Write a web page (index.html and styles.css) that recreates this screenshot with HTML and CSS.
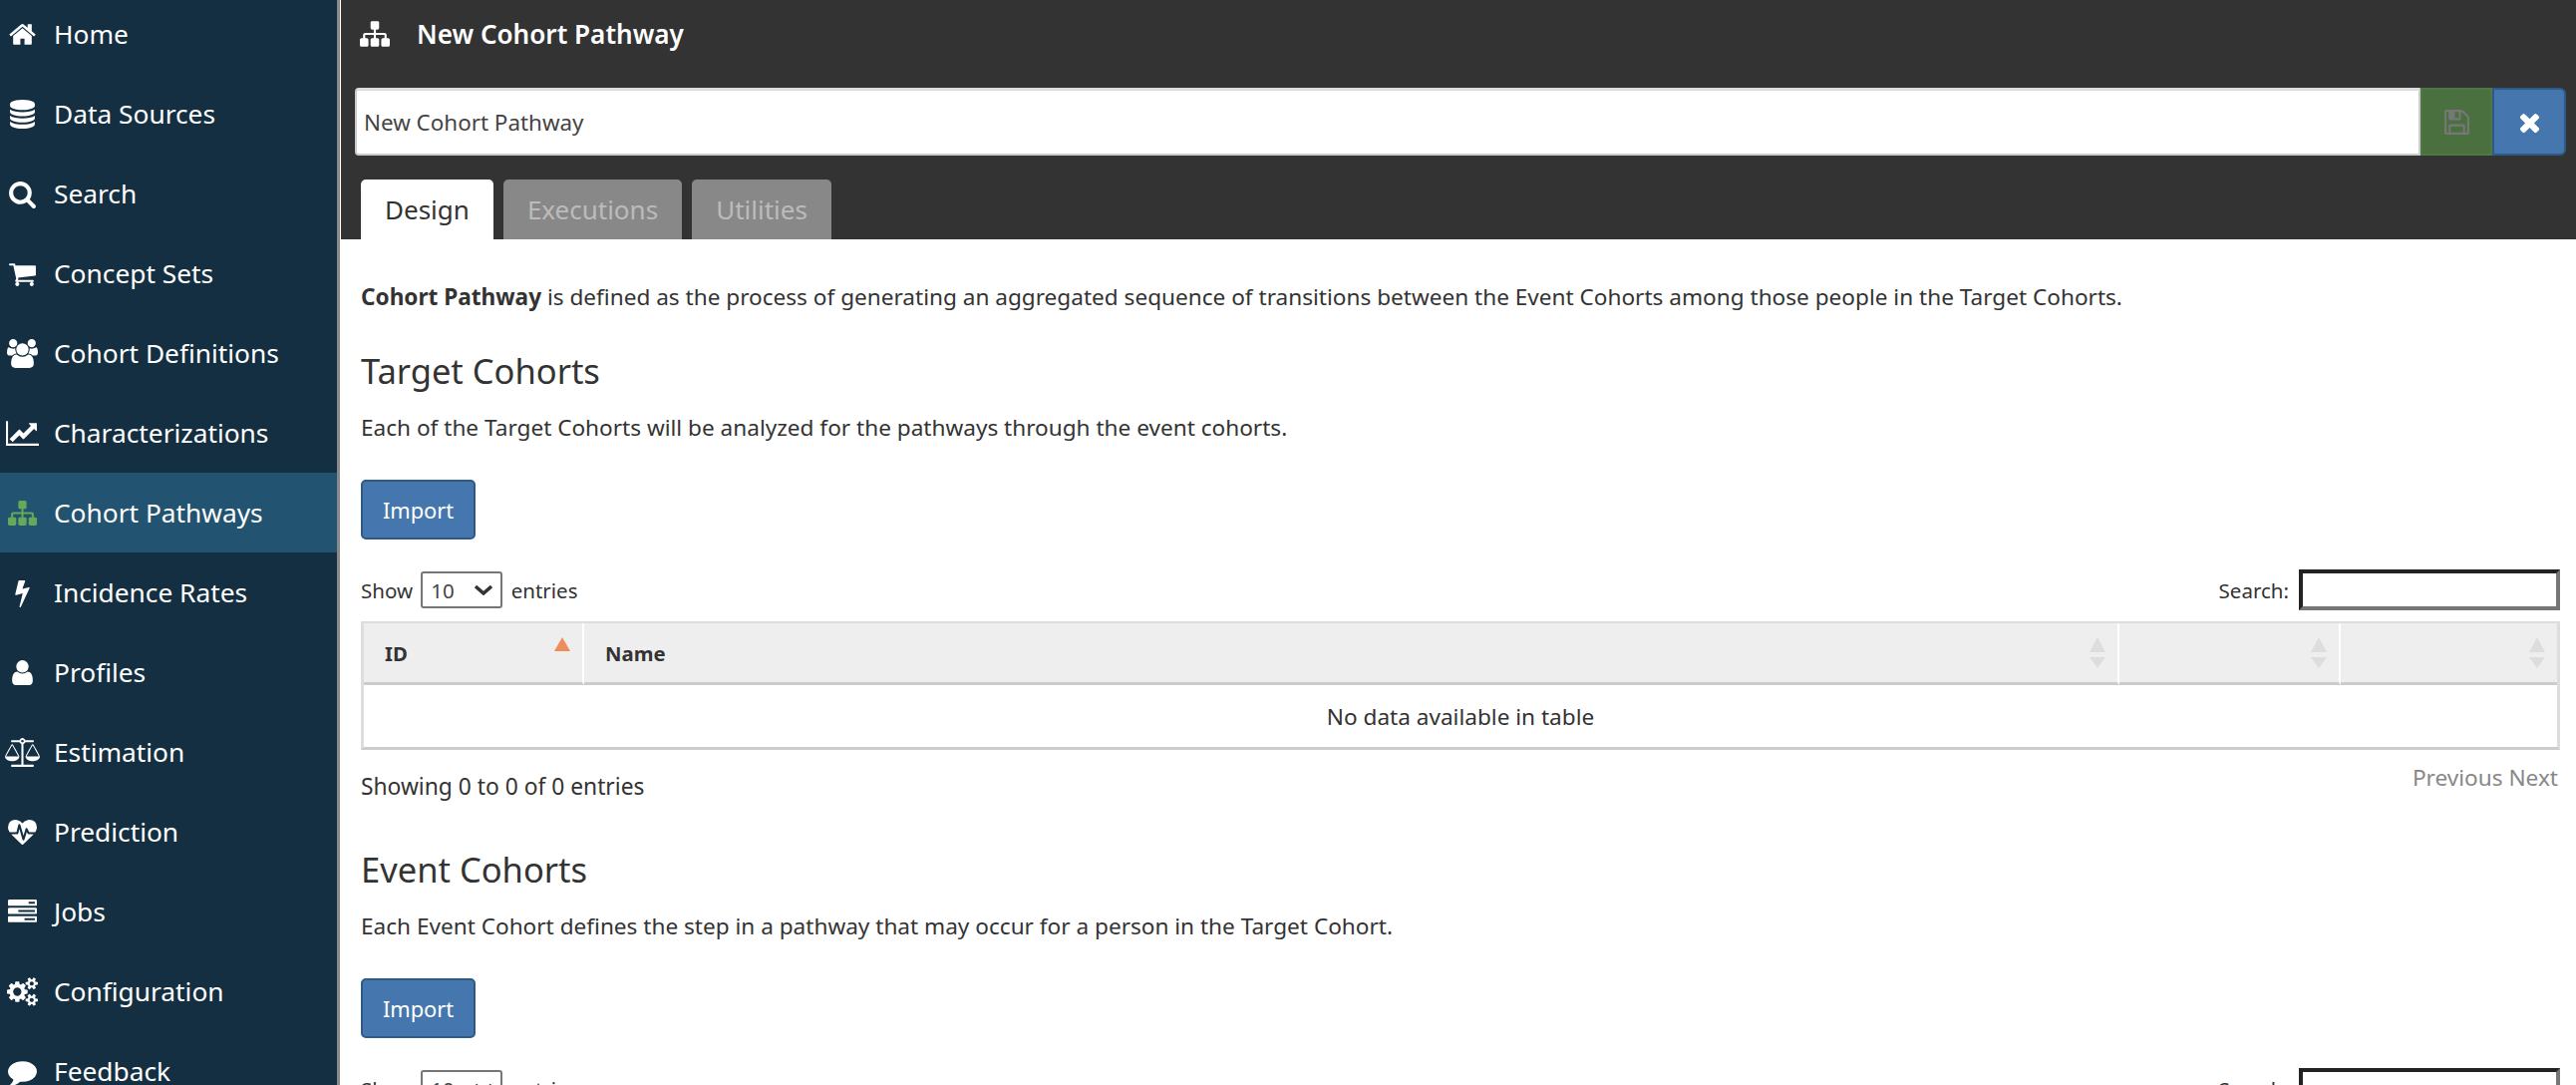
FILE: index.html
```html
<!DOCTYPE html>
<html lang="en">

<head>
    <meta charset="UTF-8">
    <title>New Cohort Pathway</title>
    <link rel="stylesheet" href="styles.css">
</head>

<body>
    <svg class="sprite" xmlns="http://www.w3.org/2000/svg">
        <symbol id="i-home" viewBox="0 0 1792 1792"><path d="M1472 992v480q0 26-19 45t-45 19h-384v-384h-256v384h-384q-26 0-45-19t-19-45v-480q0-1 .5-3t.5-3l575-474 575 474q1 2 1 6zm223-69l-62 74q-8 9-21 11h-3q-13 0-21-7l-692-577-692 577q-12 8-24 7-13-2-21-11l-62-74q-8-10-7-23.500t11-21.500l719-599q32-26 76-26t76 26l244 204v-195q0-14 9-23t23-9h192q14 0 23 9t9 23v408l219 182q10 8 11 21.500t-7 23.500z"/></symbol>
        <symbol id="i-database" viewBox="0 0 1536 1792"><path d="M768 768q237 0 443-43t325-127v170q0 69-103 128t-280 93.500-385 34.500-385-34.500-280-93.500-103-128v-170q119 84 325 127t443 43zm0 768q237 0 443-43t325-127v170q0 69-103 128t-280 93.500-385 34.500-385-34.500-280-93.500-103-128v-170q119 84 325 127t443 43zm0-384q237 0 443-43t325-127v170q0 69-103 128t-280 93.500-385 34.500-385-34.500-280-93.500-103-128v-170q119 84 325 127t443 43zm0-1152q208 0 385 34.500t280 93.500 103 128v128q0 69-103 128t-280 93.500-385 34.500-385-34.500-280-93.500-103-128v-128q0-69 103-128t280-93.500 385-34.500z"/></symbol>
        <symbol id="i-search" viewBox="0 0 1792 1792"><path d="M1216 832q0-185-131.500-316.500t-316.500-131.500-316.500 131.500-131.500 316.500 131.500 316.500 316.500 131.500 316.500-131.500 131.500-316.500zm512 832q0 52-38 90t-90 38q-54 0-90-38l-343-342q-179 124-399 124-143 0-273.500-55.500t-225-150-150-225-55.500-273.500 55.500-273.500 150-225 225-150 273.500-55.500 273.500 55.500 225 150 150 225 55.500 273.500q0 220-124 399l343 343q37 37 37 90z"/></symbol>
        <symbol id="i-cart" viewBox="0 0 1792 1792"><path d="M704 1536q0 52-38 90t-90 38-90-38-38-90 38-90 90-38 90 38 38 90zm896 0q0 52-38 90t-90 38-90-38-38-90 38-90 90-38 90 38 38 90zm128-1088v512q0 24-16.500 42.500t-40.500 21.500l-1044 122q13 60 13 70 0 16-24 64h920q26 0 45 19t19 45-19 45-45 19h-1024q-26 0-45-19t-19-45q0-11 8-31.500t16-36 21.500-40 15.500-29.500l-177-823h-204q-26 0-45-19t-19-45 19-45 45-19h256q16 0 28.500 6.500t19.500 15.500 13 24.500 8 26 5.500 29.500 4.500 26h1201q26 0 45 19t19 45z"/></symbol>
        <symbol id="i-users" viewBox="0 0 1920 1792"><path d="M593 896q-162 5-265 128h-134q-82 0-138-40.500t-56-118.500q0-353 124-353 6 0 43.500 21t97.500 42.500 119 21.500q67 0 133-23-5 37-5 66 0 139 81 256zm1071 637q0 120-73 189.500t-194 69.500h-874q-121 0-194-69.500t-73-189.500q0-53 3.500-103.500t14-109 26.500-108.500 43-97.500 62-81 85.500-53.500 111.500-20q10 0 43 21.500t73 48 107 48 135 21.500 135-21.500 107-48 73-48 43-21.500q61 0 111.500 20t85.500 53.500 62 81 43 97.500 26.500 108.500 14 109 3.500 103.500zm-1024-1277q0 106-75 181t-181 75-181-75-75-181 75-181 181-75 181 75 75 181zm704 384q0 159-112.500 271.500t-271.500 112.500-271.500-112.500-112.500-271.500 112.500-271.500 271.500-112.500 271.500 112.500 112.500 271.500zm576 225q0 78-56 118.500t-138 40.500h-134q-103-123-265-128 81-117 81-256 0-29-5-66 66 23 133 23 59 0 119-21.500t97.500-42.500 43.500-21q124 0 124 353zm-128-609q0 106-75 181t-181 75-181-75-75-181 75-181 181-75 181 75 75 181z"/></symbol>
        <symbol id="i-chart" viewBox="0 0 2048 1792"><path d="M2048 1536v128h-2048v-1536h128v1408h1920zm-128-1248v435q0 21-19.500 29.500t-35.500-7.500l-121-121-633 633q-10 10-23 10t-23-10l-233-233-416 416-192-192 585-585q10-10 23-10t23 10l233 233 464-464-121-121q-16-16-7.500-35.500t29.500-19.500h435q14 0 23 9t9 23z"/></symbol>
        <symbol id="i-sitemap" viewBox="0 0 1792 1792"><path d="M1792 1248v320q0 40-28 68t-68 28h-320q-40 0-68-28t-28-68v-320q0-40 28-68t68-28h96v-192h-512v192h96q40 0 68 28t28 68v320q0 40-28 68t-68 28h-320q-40 0-68-28t-28-68v-320q0-40 28-68t68-28h96v-192h-512v192h96q40 0 68 28t28 68v320q0 40-28 68t-68 28h-320q-40 0-68-28t-28-68v-320q0-40 28-68t68-28h96v-192q0-52 38-90t90-38h512v-192h-96q-40 0-68-28t-28-68v-320q0-40 28-68t68-28h320q40 0 68 28t28 68v320q0 40-28 68t-68 28h-96v192h512q52 0 90 38t38 90v192h96q40 0 68 28t28 68z"/></symbol>
        <symbol id="i-bolt" viewBox="0 0 896 1792"><path d="M885 566q18 20 7 44l-540 1157q-13 25-42 25-4 0-14-2-17-5-25.500-19t-4.500-30l197-808-406 101q-4 1-12 1-18 0-31-11-18-15-13-39l201-825q4-14 16-23t28-9h328q19 0 32 12.500t13 29.500q0 8-5 18l-171 463 396-98q8-2 12-2 19 0 34 15z"/></symbol>
        <symbol id="i-user" viewBox="128 0 1536 1792"><path d="M1536 1399q0 109-62.500 187t-150.500 78h-854q-88 0-150.500-78t-62.500-187q0-85 8.500-160.500t31.500-152 58.500-131 94-89 134.500-34.500q131 128 313 128t313-128q76 0 134.500 34.500t94 89 58.500 131 31.500 152 8.500 160.500zm-256-887q0 159-112.500 271.500t-271.500 112.500-271.500-112.500-112.500-271.500 112.500-271.500 271.500-112.500 271.500 112.500 112.500 271.500z"/></symbol>
        <symbol id="i-scale" viewBox="0 0 2176 1792"><path d="M1728 448l-384 704h768zm-1280 0l-384 704h768zm821-192q-14 40-45.500 71.500t-71.500 45.500v1291h608q14 0 23 9t9 23v64q0 14-9 23t-23 9h-1344q-14 0-23-9t-9-23v-64q0-14 9-23t23-9h608v-1291q-40-14-71.500-45.500t-45.500-71.500h-491q-14 0-23-9t-9-23v-64q0-14 9-23t23-9h491q21-57 70-92.500t111-35.500 111 35.500 70 92.500h491q14 0 23 9t9 23v64q0 14-9 23t-23 9h-491zm-181 16q33 0 56.500-23.500t23.500-56.500-23.500-56.500-56.500-23.500-56.500 23.500-23.500 56.500 23.500 56.500 56.500 23.500zm1088 880q0 73-46.500 131t-117.500 91-144.500 49.500-139.500 16.500-139.500-16.500-144.500-49.500-117.500-91-46.500-131q0-11 35-81t92-174.500 107-195.500 102-184 56-100q18-33 56-33t56 33q4 7 56 100t102 184 107 195.500 92 174.500 35 81zm-1280 0q0 73-46.500 131t-117.500 91-144.500 49.500-139.500 16.500-139.500-16.500-144.500-49.500-117.500-91-46.500-131q0-11 35-81t92-174.500 107-195.500 102-184 56-100q18-33 56-33t56 33q4 7 56 100t102 184 107 195.500 92 174.500 35 81z"/></symbol>
        <symbol id="i-heartbeat" viewBox="0 0 1792 1792"><path d="M1280 1024h305q-5 6-10 10.500t-9 7.500l-3 4-623 600q-18 18-44 18t-44-18l-624-602q-5-2-21-20h369q22 0 39.500-13.500t22.500-34.500l70-281 190 667q6 20 23 33t39 13q21 0 38-13t23-33l146-485 56 112q18 35 57 35zm512-428q0 145-103 300h-369l-111-221q-8-17-25.500-27t-36.500-8q-45 5-56 46l-129 430-196-686q-6-20-23.500-33t-39.500-13-39 13.500-22 34.500l-116 464h-423q-103-155-103-300 0-220 127-344t351-124q62 0 126.500 21.500t120 58 95.500 68.500 76 68q36-36 76-68t95.500-68.500 120-58 126.500-21.500q224 0 351 124t127 344z"/></symbol>
        <symbol id="i-tasks" viewBox="0 0 1792 1792"><path d="M1024 1408h640v-128h-640v128zm-384-512h1024v-128h-1024v128zm640-512h384v-128h-384v128zm512 832v256q0 26-19 45t-45 19h-1664q-26 0-45-19t-19-45v-256q0-26 19-45t45-19h1664q26 0 45 19t19 45zm0-512v256q0 26-19 45t-45 19h-1664q-26 0-45-19t-19-45v-256q0-26 19-45t45-19h1664q26 0 45 19t19 45zm0-512v256q0 26-19 45t-45 19h-1664q-26 0-45-19t-19-45v-256q0-26 19-45t45-19h1664q26 0 45 19t19 45z"/></symbol>
        <symbol id="i-cogs" viewBox="0 0 1920 1792"><path d="M896 896q0-106-75-181t-181-75-181 75-75 181 75 181 181 75 181-75 75-181zm768 512q0-52-38-90t-90-38-90 38-38 90q0 53 37.500 90.500t90.500 37.500 90.500-37.500 37.500-90.500zm0-1024q0-52-38-90t-90-38-90 38-38 90q0 53 37.500 90.500t90.500 37.500 90.500-37.500 37.500-90.500zm-384 421v185q0 10-7 19.500t-16 10.500l-155 24q-11 35-32 76 34 48 90 115 7 11 7 20 0 12-7 19-23 30-82.500 89.500t-78.500 59.500q-11 0-21-7l-115-90q-37 19-77 31-11 108-23 155-7 24-30 24h-186q-11 0-20-7.500t-10-17.500l-23-153q-34-10-75-31l-118 89q-7 7-20 7-11 0-21-8-144-133-144-160 0-9 7-19 10-14 41-53t47-61q-23-44-35-82l-152-24q-10-1-17-9.500t-7-19.500v-185q0-10 7-19.500t16-10.500l155-24q11-35 32-76-34-48-90-115-7-11-7-20 0-12 7-20 22-30 82-89t79-59q11 0 21 7l115 90q34-18 77-32 11-108 23-154 7-24 30-24h186q11 0 20 7.500t10 17.500l23 153q34 10 75 31l118-89q8-7 20-7 11 0 21 8 144 133 144 160 0 8-7 19-12 16-42 54t-45 60q23 48 34 82l152 23q10 2 17 10.500t7 19.500zm640 533v140q0 16-149 31-12 27-30 52 51 113 51 138 0 4-4 7-122 71-124 71-8 0-46-47t-52-68q-20 2-30 2t-30-2q-14 21-52 68t-46 47q-2 0-124-71-4-3-4-7 0-25 51-138-18-25-30-52-149-15-149-31v-140q0-16 149-31 13-29 30-52-51-113-51-138 0-4 4-7 4-2 35-20t59-34 30-16q8 0 46 46.500t52 67.500q20-2 30-2t30 2q51-71 92-112l6-2q4 0 124 70 4 3 4 7 0 25-51 138 17 23 30 52 149 15 149 31zm0-1024v140q0 16-149 31-12 27-30 52 51 113 51 138 0 4-4 7-122 71-124 71-8 0-46-47t-52-68q-20 2-30 2t-30-2q-14 21-52 68t-46 47q-2 0-124-71-4-3-4-7 0-25 51-138-18-25-30-52-149-15-149-31v-140q0-16 149-31 13-29 30-52-51-113-51-138 0-4 4-7 4-2 35-20t59-34 30-16q8 0 46 46.500t52 67.500q20-2 30-2t30 2q51-71 92-112l6-2q4 0 124 70 4 3 4 7 0 25-51 138 17 23 30 52 149 15 149 31z"/></symbol>
        <symbol id="i-comment" viewBox="0 0 1792 1792"><path d="M1792 896q0 174-120 321.500t-326 233-450 85.500q-70 0-145-8-198 175-460 242-49 14-114 22-17 2-30.500-9t-17.500-29v-1q-3-4-.5-12t2-10 4.500-9.500l6-9 7-8.500 8-9q7-8 31-34.500t34.500-38 31-39.500 32.500-51 27-59 26-76q-157-89-247.500-220t-90.500-281q0-130 71-248.500t191-204.500 286-136.500 348-50.500q244 0 450 85.500t326 233 120 321.500z"/></symbol>
        <symbol id="i-save" viewBox="0 0 1792 1792"><path d="M512 1536h768v-384h-768v384zm896 0h128v-896q0-14-10-38.500t-20-34.500l-281-281q-10-10-34-20t-39-10v416q0 40-28 68t-68 28h-576q-40 0-68-28t-28-68v-416h-128v1280h128v-416q0-40 28-68t68-28h832q40 0 68 28t28 68v416zm-384-928v-320q0-13-9.500-22.500t-22.500-9.500h-192q-13 0-22.500 9.500t-9.500 22.500v320q0 13 9.500 22.500t22.500 9.500h192q13 0 22.500-9.500t9.500-22.500zm640 32v928q0 40-28 68t-68 28h-1344q-40 0-68-28t-28-68v-1344q0-40 28-68t68-28h928q40 0 88 20t76 48l280 280q28 28 48 76t20 88z"/></symbol>
        <symbol id="i-times" viewBox="0 0 1792 1792"><path d="M1490 1322q0 40-28 68l-136 136q-28 28-68 28t-68-28l-294-294-294 294q-28 28-68 28t-68-28l-136-136q-28-28-28-68t28-68l294-294-294-294q-28-28-28-68t28-68l136-136q28-28 68-28t68 28l294 294 294-294q28-28 68-28t68 28l136 136q28 28 28 68t-28 68l-294 294 294 294q28 28 28 68z"/></symbol>
    </svg>

    <div class="app">
        <nav class="sidebar">
            <ul class="nav-list">
                <li class="nav-item"><span class="nav-icon"><svg class="w-home"><use href="#i-home"/></svg></span>Home</li>
                <li class="nav-item"><span class="nav-icon"><svg class="w-database"><use href="#i-database"/></svg></span>Data Sources</li>
                <li class="nav-item"><span class="nav-icon"><svg class="w-home"><use href="#i-search"/></svg></span>Search</li>
                <li class="nav-item"><span class="nav-icon"><svg class="w-home"><use href="#i-cart"/></svg></span>Concept Sets</li>
                <li class="nav-item"><span class="nav-icon"><svg class="w-users"><use href="#i-users"/></svg></span>Cohort Definitions</li>
                <li class="nav-item"><span class="nav-icon"><svg class="w-chart"><use href="#i-chart"/></svg></span>Characterizations</li>
                <li class="nav-item active"><span class="nav-icon"><svg class="w-home"><use href="#i-sitemap"/></svg></span>Cohort Pathways</li>
                <li class="nav-item"><span class="nav-icon"><svg class="w-bolt"><use href="#i-bolt"/></svg></span>Incidence Rates</li>
                <li class="nav-item"><span class="nav-icon"><svg class="w-database"><use href="#i-user"/></svg></span>Profiles</li>
                <li class="nav-item"><span class="nav-icon"><svg class="w-scale"><use href="#i-scale"/></svg></span>Estimation</li>
                <li class="nav-item"><span class="nav-icon"><svg class="w-home"><use href="#i-heartbeat"/></svg></span>Prediction</li>
                <li class="nav-item"><span class="nav-icon"><svg class="w-home"><use href="#i-tasks"/></svg></span>Jobs</li>
                <li class="nav-item"><span class="nav-icon"><svg class="w-users"><use href="#i-cogs"/></svg></span>Configuration</li>
                <li class="nav-item"><span class="nav-icon"><svg class="w-home"><use href="#i-comment"/></svg></span>Feedback</li>
            </ul>
        </nav>

        <main class="main">
            <header class="page-header">
                <div class="page-title">
                    <svg class="title-icon"><use href="#i-sitemap"/></svg>
                    <span>New Cohort Pathway</span>
                </div>
                <div class="name-row">
                    <input class="name-input" type="text" value="New Cohort Pathway">
                    <button class="icon-btn save-btn" disabled><svg><use href="#i-save"/></svg></button>
                    <button class="icon-btn close-btn"><svg><use href="#i-times"/></svg></button>
                </div>
                <div class="tabs">
                    <div class="tab active">Design</div>
                    <div class="tab">Executions</div>
                    <div class="tab">Utilities</div>
                </div>
            </header>

            <div class="content">
                <p class="intro"><b>Cohort Pathway</b> is defined as the process of generating an aggregated sequence of transitions between the Event Cohorts among those people in the Target Cohorts.</p>

                <section class="cohort-section">
                    <h2>Target Cohorts</h2>
                    <p class="section-desc">Each of the Target Cohorts will be analyzed for the pathways through the event cohorts.</p>
                    <button class="import-btn">Import</button>
                    <div class="table-tools">
                        <label class="length-control">Show <select><option>10</option><option>25</option><option>50</option></select> entries</label>
                        <label class="search-control">Search: <input type="search"></label>
                    </div>
                    <table class="data-table">
                        <thead>
                            <tr>
                                <th class="col-id sorted">ID</th>
                                <th class="col-name">Name</th>
                                <th class="col-edit"></th>
                                <th class="col-remove"></th>
                            </tr>
                        </thead>
                        <tbody>
                            <tr><td colspan="4">No data available in table</td></tr>
                        </tbody>
                    </table>
                    <div class="table-footer">
                        <span class="table-info">Showing 0 to 0 of 0 entries</span>
                        <span class="table-paging">Previous Next</span>
                    </div>
                </section>

                <section class="cohort-section event-section">
                    <h2>Event Cohorts</h2>
                    <p class="section-desc">Each Event Cohort defines the step in a pathway that may occur for a person in the Target Cohort.</p>
                    <button class="import-btn">Import</button>
                    <div class="table-tools">
                        <label class="length-control">Show <select><option>10</option><option>25</option><option>50</option></select> entries</label>
                        <label class="search-control">Search: <input type="search"></label>
                    </div>
                </section>
            </div>
        </main>
    </div>
</body>
</html>
```

FILE: styles.css
```css
:root {
    --sidebar-color: #132f41;
    --sidebar-active: #225370;
    --header-color: #333333;
    --text-color: #333333;
    --blue-color: #4577ae;
    --blue-border: #2e5a88;
}

* {
    box-sizing: border-box;
    margin: 0;
    padding: 0;
}

html,
body {
    height: 100%;
    overflow: hidden;
}

body {
    font-family: "Noto Sans", "Open Sans", sans-serif;
    font-size: 22.6px;
    color: var(--text-color);
    background-color: white;
}

.sprite {
    display: none;
}

.app {
    display: flex;
    height: 1088px;
    overflow: hidden;
}

svg {
    fill: currentColor;
}

/* Sidebar */
.sidebar {
    flex: 0 0 341px;
    margin-right: 1px;
    background-color: var(--sidebar-color);
    border-right: 3px solid #8a8a8a;
    overflow: hidden;
}

.nav-list {
    list-style: none;
    margin-top: -6px;
}

.nav-item {
    display: flex;
    align-items: center;
    height: 80px;
    font-size: 26.3px;
    color: white;
}

.nav-item.active {
    background-color: var(--sidebar-active);
}

.nav-item.active .nav-icon {
    color: #65a95a;
}

.nav-icon {
    display: flex;
    justify-content: center;
    width: 44px;
    margin-right: 10px;
}

.nav-icon svg {
    height: 29px;
}

.w-home { width: 29px; }
.w-database { width: 25px; }
.w-users { width: 31px; }
.w-chart { width: 33px; }
.w-bolt { width: 15px; }
.w-scale { width: 35px; }

/* Page header */
.main {
    flex: 1;
    min-width: 0;
}

.page-header {
    display: flex;
    flex-direction: column;
    height: 240px;
    background-color: var(--header-color);
}

.page-title {
    display: flex;
    align-items: center;
    height: 68px;
    padding-left: 19px;
    font-size: 26.1px;
    font-weight: 600;
    color: white;
}

.title-icon {
    width: 30px;
    height: 30px;
    margin-right: 27px;
}

.name-row {
    display: flex;
    height: 68px;
    margin: 20px 10px 0 14px;
}

.name-input {
    flex: 1;
    min-width: 0;
    padding: 0 7px;
    font-family: inherit;
    font-size: 22.4px;
    color: #444;
    background-color: white;
    border: 2px solid #ccc;
    border-top: 3px solid #ddd;
    border-radius: 4px 0 0 4px;
}

.icon-btn {
    display: flex;
    align-items: center;
    justify-content: center;
    width: 72px;
    height: 68px;
}

.icon-btn svg {
    width: 29px;
    height: 29px;
}

.save-btn {
    color: #777;
    background-color: #4b7040;
    border: 2px solid #4f7744;
}

.close-btn {
    width: 74px;
    color: white;
    background-color: var(--blue-color);
    border: 2px solid var(--blue-border);
    border-radius: 0 6px 6px 0;
}

.tabs {
    display: flex;
    gap: 10px;
    margin-top: 24px;
    padding-left: 20px;
}

.tab {
    height: 60px;
    padding: 0 24px;
    line-height: 60px;
    font-size: 26px;
    color: #bbb;
    background-color: #888;
    border-radius: 5px 5px 0 0;
}

.tab.active {
    color: #333;
    background-color: white;
}

/* Content */
.content {
    padding: 0 16px 0 20px;
}

.intro {
    margin-top: 44px;
    line-height: 28px;
}

h2 {
    font-size: 34.5px;
    font-weight: 400;
    line-height: 40px;
}

.cohort-section {
    margin-top: 40px;
}

.event-section {
    margin-top: 48px;
}

.section-desc {
    margin-top: 23px;
    line-height: 28px;
}

.import-btn {
    display: block;
    width: 115px;
    height: 60px;
    margin-top: 38px;
    font-family: inherit;
    font-size: 21.8px;
    color: white;
    background-color: var(--blue-color);
    border: 2px solid var(--blue-border);
    border-radius: 5px;
}

.table-tools {
    display: flex;
    justify-content: space-between;
    align-items: center;
    height: 41px;
    margin-top: 30px;
    font-size: 20.5px;
}

.length-control select {
    appearance: none;
    width: 82px;
    height: 37px;
    margin: 0 3px;
    padding-left: 8px;
    font-family: inherit;
    font-size: 20.5px;
    color: #444;
    background: white url("data:image/svg+xml,%3Csvg xmlns='http://www.w3.org/2000/svg' viewBox='0 0 20 11'%3E%3Cpath d='M2 2l8 7 8-7' fill='none' stroke='%23333' stroke-width='3.500'/%3E%3C/svg%3E") no-repeat right 7px center / 20px 11px;
    border: 2px solid #767676;
    border-radius: 3px;
}

.search-control {
    display: flex;
    align-items: center;
    gap: 10px;
}

.search-control input {
    width: 262px;
    height: 41px;
    background-color: white;
    border: 4px solid;
    border-color: #222 #767676 #767676 #222;
}

.data-table {
    width: 100%;
    margin-top: 11px;
    table-layout: fixed;
    border-collapse: separate;
    border-spacing: 0;
    border: solid #ddd;
    border-width: 2px 3px 3px 3px;
    border-bottom-color: #ccc;
}

.data-table th {
    position: relative;
    height: 62px;
    padding-left: 21px;
    font-size: 20.3px;
    text-align: left;
    background-color: #eee;
    border-bottom: 3px solid #ccc;
    border-right: 2px solid white;
}

.data-table th:last-child {
    border-right: none;
}

.data-table td {
    height: 62px;
    text-align: center;
}

.col-id { width: 221px; }
.col-edit { width: 222px; }
.col-remove { width: 217px; }

/* sort arrows sit over the header cell */
.data-table th::before,
.data-table th::after {
    content: "";
    position: absolute;
    right: 12px;
    border-left: 8px solid transparent;
    border-right: 8px solid transparent;
}

.data-table th::before {
    top: 14px;
    border-bottom: 15px solid #ddd;
}

.data-table th::after {
    top: 34px;
    border-top: 11px solid #ddd;
}

.data-table th.sorted::before {
    border-bottom: 14px solid #ee8d5c;
}

.data-table th.sorted::after {
    display: none;
}

.table-footer {
    display: flex;
    justify-content: space-between;
    padding-top: 12px;
}

.table-info {
    margin-top: 9px;
    font-size: 22.8px;
}

.table-paging {
    color: #888;
    padding-right: 2px;
}
```
